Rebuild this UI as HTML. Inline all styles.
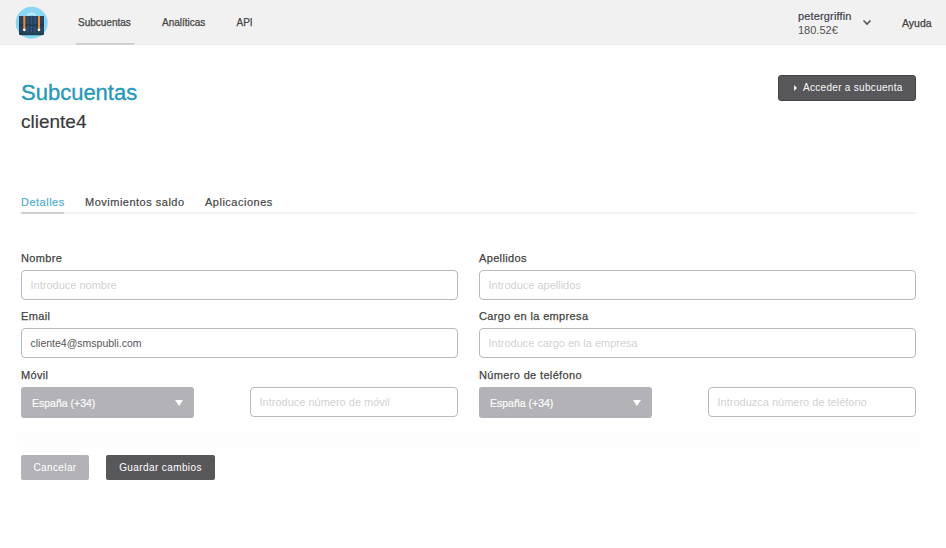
<!DOCTYPE html>
<html><head><meta charset="utf-8">
<style>
*{margin:0;padding:0;box-sizing:border-box}
html,body{width:946px;height:548px;overflow:hidden;background:#fff;font-family:"Liberation Sans",sans-serif;color:#4a4a4a}
.abs{position:absolute;white-space:nowrap}
#hdr{position:absolute;left:0;top:0;width:946px;height:45px;background:#f1f1f1;border-bottom:1px solid #ebebeb}
.nav{font-size:10px;color:#454545;top:17px;-webkit-text-stroke:0.25px #454545}
.ul{position:absolute;background:#c8c8c8;height:2px}
.title{font-size:22px;color:#2798ba;left:21px;top:80px;-webkit-text-stroke:0.35px #2798ba}
.sub{font-size:19px;color:#3a3a3a;left:21px;top:111px;-webkit-text-stroke:0.2px #3a3a3a}
.btn{position:absolute;border-radius:2px;color:#fff;font-size:10px;text-align:center;letter-spacing:0.4px}
.tab{font-size:11px;letter-spacing:0.5px;color:#454545;top:196px;-webkit-text-stroke:0.2px #454545}
.lbl{font-size:11px;color:#434343;letter-spacing:0.35px;-webkit-text-stroke:0.25px #434343}
.inp{position:absolute;border:1px solid #bababa;border-radius:4px;height:30px;background:#fff}
.ph{font-size:11px;color:#d2d2d2;position:absolute;left:8.5px;top:8px;white-space:nowrap}
.sel{position:absolute;background:#b3b3b7;border-radius:3px;height:31px}
.seltxt{position:absolute;left:11px;top:10px;font-size:10.5px;color:#fafafa;white-space:nowrap;-webkit-text-stroke:0.2px #fafafa}
.tri{position:absolute;width:0;height:0;border-left:4.5px solid transparent;border-right:4.5px solid transparent;border-top:6px solid #fff}
</style></head><body>
<div id="hdr"></div>
<!-- logo -->
<svg class="abs" style="left:15px;top:6px" width="34" height="34" viewBox="0 0 34 34">
  <circle cx="16.7" cy="16.8" r="16" fill="#8ad6f3"/>
  <path d="M12.5 9.2 Q16.6 5.8 20.7 9.2" stroke="#c8eefb" stroke-width="1.8" fill="none"/>
  <path d="M4 10 H29 V27.5 Q29 29.3 27.2 29.3 H5.8 Q4 29.3 4 27.5 Z" fill="#26445d"/>
  <rect x="12.5" y="10" width="1" height="17" fill="#34567a"/>
  <rect x="16" y="10" width="1" height="17" fill="#34567a"/>
  <rect x="19.5" y="10" width="1" height="17" fill="#34567a"/>
  <rect x="4" y="18.6" width="25" height="1" fill="#1a3245"/>
  <rect x="4" y="27.5" width="25" height="1" fill="#1d384d"/>
  <rect x="8.3" y="10" width="2" height="13.6" fill="#f08b35"/>
  <rect x="23" y="10" width="2" height="13.6" fill="#f08b35"/>
  <circle cx="9.3" cy="23.8" r="1.35" fill="#fff"/>
  <circle cx="24" cy="23.8" r="1.35" fill="#fff"/>
</svg>
<div class="abs nav" style="left:78px">Subcuentas</div>
<div class="ul" style="left:76px;top:43px;width:58px;background:#cfcfcf"></div>
<div class="abs nav" style="left:162px">Analíticas</div>
<div class="abs nav" style="left:236.5px">API</div>

<div class="abs" style="left:798px;top:10px;font-size:11px;letter-spacing:0.15px;color:#404050;-webkit-text-stroke:0.2px #404050">petergriffin</div>
<div class="abs" style="left:798px;top:24px;font-size:11px;color:#505050">180.52€</div>
<svg class="abs" style="left:862px;top:19px" width="10" height="7" viewBox="0 0 10 7"><path d="M1.5 1.5 L5 5 L8.5 1.5" stroke="#555" stroke-width="1.6" fill="none"/></svg>
<div class="abs" style="left:902px;top:17px;font-size:10.5px;color:#404040;-webkit-text-stroke:0.25px #404040">Ayuda</div>

<div class="abs title">Subcuentas</div>
<div class="abs sub">cliente4</div>

<div class="btn" style="left:778px;top:75px;width:138px;height:26px;background:#58585a;border:1px solid #434345;border-radius:3px"></div>
<svg class="abs" style="left:793px;top:84px" width="5" height="8" viewBox="0 0 5 8"><path d="M1 1 L4 4 L1 7 Z" fill="#f4f4f4"/></svg>
<div class="abs" style="left:803px;top:82px;font-size:10px;letter-spacing:0.3px;color:#fafafa">Acceder a subcuenta</div>

<div class="abs tab" style="left:21px;color:#4fadd3;-webkit-text-stroke:0.2px #4fadd3">Detalles</div>
<div class="abs tab" style="left:85px">Movimientos saldo</div>
<div class="abs tab" style="left:205px">Aplicaciones</div>
<div class="ul" style="left:21px;top:212px;width:895px;height:2px;background:#f4f4f4"></div>
<div class="ul" style="left:21px;top:212px;width:43px;background:#cfcfcf"></div>

<div class="abs lbl" style="left:21px;top:252px">Nombre</div>
<div class="inp" style="left:21px;top:270px;width:437px"><span class="ph">Introduce nombre</span></div>
<div class="abs lbl" style="left:479px;top:252px">Apellidos</div>
<div class="inp" style="left:479px;top:270px;width:437px"><span class="ph">Introduce apellidos</span></div>

<div class="abs lbl" style="left:21px;top:310px">Email</div>
<div class="inp" style="left:21px;top:328px;width:437px"><span class="ph" style="color:#555;font-size:10.5px">cliente4@smspubli.com</span></div>
<div class="abs lbl" style="left:479px;top:310px">Cargo en la empresa</div>
<div class="inp" style="left:479px;top:328px;width:437px"><span class="ph">Introduce cargo en la empresa</span></div>

<div class="abs lbl" style="left:21px;top:369px">Móvil</div>
<div class="sel" style="left:21px;top:387px;width:173px"><span class="seltxt">España (+34)</span><span class="tri" style="left:154px;top:13px"></span></div>
<div class="inp" style="left:250px;top:387px;width:208px"><span class="ph">Introduce número de móvil</span></div>
<div class="abs lbl" style="left:479px;top:369px">Número de teléfono</div>
<div class="sel" style="left:479px;top:387px;width:173px"><span class="seltxt">España (+34)</span><span class="tri" style="left:154px;top:13px"></span></div>
<div class="inp" style="left:708px;top:387px;width:208px"><span class="ph">Introduzca número de teléfono</span></div>

<div class="abs" style="left:17px;top:432px;width:903px;height:15px;background:#fdfdfd"></div>

<div class="btn" style="left:21px;top:455px;width:68px;height:25px;background:#b3b3b7;line-height:25px">Cancelar</div>
<div class="btn" style="left:106px;top:455px;width:109px;height:25px;background:#58585a;line-height:25px">Guardar cambios</div>
</body></html>
